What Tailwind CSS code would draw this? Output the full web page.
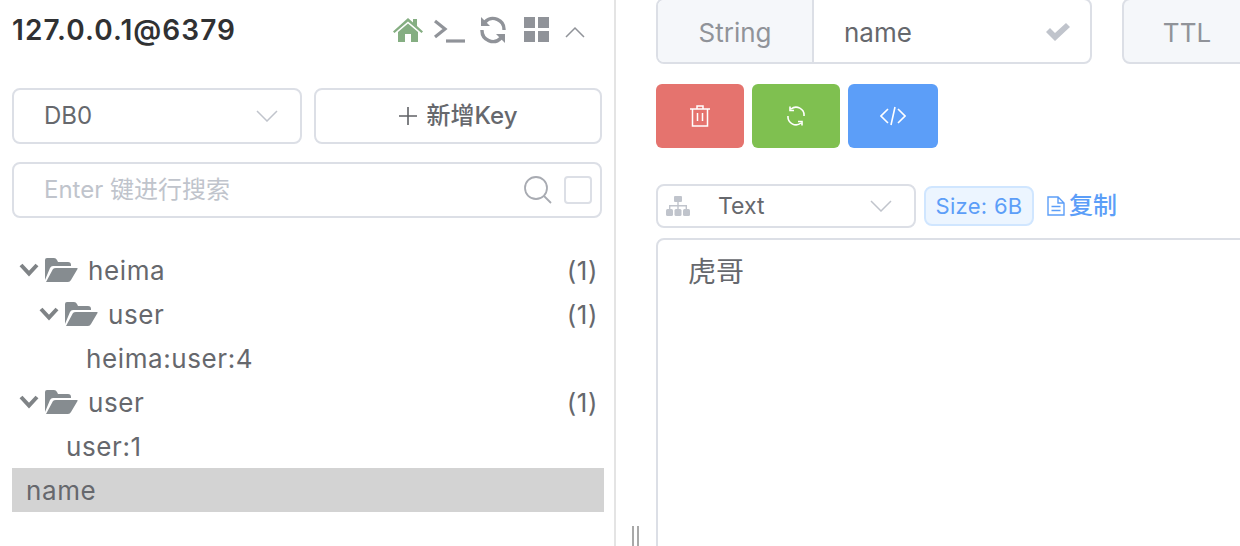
<!DOCTYPE html>
<html lang="zh">
<head>
    <meta charset="UTF-8">
    <title>Redis Key</title>
    <script src="https://cdn.jsdelivr.net/npm/@tailwindcss/browser@4"></script>
</head>
<body class="bg-white overflow-hidden">
<div class="flex h-[546px] w-[1240px] overflow-hidden text-[#66686d] font-['Inter','Noto_Sans_CJK_SC',sans-serif]">
    <!-- Left panel -->
    <div class="w-[616px] shrink-0 border-r-2 border-[#e4e4e4] pl-3 pr-[10px] flex flex-col">
        <!-- Connection title -->
        <div class="h-[60px] flex items-center justify-between">
            <span class="text-[28px] font-semibold text-[#303133] tracking-[1.05px]">127.0.0.1@6379</span>
            <div class="flex items-center mr-[19px]">
                <svg class="w-[30px] h-[26px]" viewBox="0 0 30 26" fill="#85ae82">
                    <path d="M15 1 L20 5.5 V2 H24 V9 L30 14.5 L28.5 16 L15 4.5 L1.500 16 L0 14.500Z"/>
                    <path d="M5 15 L15 6.500 L25 15 V25 H18 V17 H12 V25 H5Z"/>
                </svg>
                <svg class="w-[32px] h-[26px] ml-[10px]" viewBox="0 0 32 26" fill="none" stroke="#909399" stroke-width="3.200">
                    <path d="M2 4 L12 12 L2 20"/>
                    <path d="M13 24 H32"/>
                </svg>
                <svg class="w-[28px] h-[28px] ml-[14px]" viewBox="0 0 28 28" fill="none" stroke="#909399" stroke-width="3.400">
                    <path d="M6 6 A11 11 0 0 1 25 14"/>
                    <path d="M22 22 A11 11 0 0 1 3 14"/>
                    <path d="M2 1 V10 H11Z" fill="#909399" stroke="none"/>
                    <path d="M26 27 V18 H17Z" fill="#909399" stroke="none"/>
                </svg>
                <svg class="w-[26px] h-[26px] ml-[17px]" viewBox="0 0 26 26" fill="#909399">
                    <rect x="0" y="0" width="11" height="11"/>
                    <rect x="14" y="0" width="11" height="11"/>
                    <rect x="0" y="14" width="11" height="11"/>
                    <rect x="14" y="14" width="11" height="11"/>
                </svg>
                <svg class="w-[20px] h-[12px] ml-[15px] mt-[4px]" viewBox="0 0 20 12" fill="none" stroke="#909399" stroke-width="1.500">
                    <path d="M1 11 L10 2 L19 11"/>
                </svg>
            </div>
        </div>

        <!-- DB select and new key -->
        <div class="flex gap-3 mt-[28px]">
            <div class="w-[290px] h-[56px] border-2 border-[#dcdfe6] rounded-lg flex items-center justify-between pl-[30px] pr-[22px] text-[24px]">
                <span>DB0</span>
                <svg class="w-[22px] h-[12px]" viewBox="0 0 22 12" fill="none" stroke="#c0c4cc" stroke-width="1.500"><path d="M1 1 L11 11 L21 1"/></svg>
            </div>
            <button class="w-[288px] h-[56px] border-2 border-[#dcdfe6] rounded-lg flex items-center justify-center gap-[10px] text-[24px] font-medium">
                <svg class="w-[18px] h-[18px]" viewBox="0 0 18 18" fill="none" stroke="#606266" stroke-width="1.600"><path d="M9 0 V18 M0 9 H18"/></svg>
                <span>新增Key</span>
            </button>
        </div>

        <!-- Search -->
        <div class="w-[590px] h-[56px] mt-[18px] border-2 border-[#dcdfe6] rounded-lg flex items-center pl-[30px] pr-[8px] text-[24px] text-[#c0c4cc]">
            <span class="flex-1">Enter 键进行搜索</span>
            <svg class="w-[28px] h-[28px] mr-[12px]" viewBox="0 0 28 28" fill="none" stroke="#a8abb2" stroke-width="1.800">
                <circle cx="12" cy="12" r="11"/>
                <path d="M20 20 L27 27"/>
            </svg>
            <span class="w-[28px] h-[28px] border-2 border-[#dcdfe6] rounded"></span>
        </div>

        <!-- Key tree -->
        <div class="mt-[30px] text-[26px] tracking-[0.6px] w-[592px]">
            <div class="h-11 flex items-center justify-between pr-[6px]">
                <div class="flex items-center">
                    <svg class="w-[20px] h-[14px] ml-[7px]" viewBox="0 0 20 14" fill="none" stroke="#7f8386" stroke-width="4"><path d="M2 2 L10 10.500 L18 2"/></svg>
                    <svg class="w-[34px] h-[26px] ml-[5px]" viewBox="0 0 34 26" fill="#868c90"><path d="M1 23 V3 Q1 1 3 1 H10 Q12 1 13 3 L14 5 H24 Q27 5 27 8 V9 H9 Q7 9 6 11Z"/><path d="M2 25 L9 12 Q10 11 12 11 H33 Q34 11 33.500 12 L27 23 Q26 25 24 25Z"/></svg>
                    <span class="ml-[10px]">heima</span>
                </div>
                <span>(1)</span>
            </div>
            <div class="h-11 flex items-center justify-between pr-[6px]">
                <div class="flex items-center">
                    <svg class="w-[20px] h-[14px] ml-[27px]" viewBox="0 0 20 14" fill="none" stroke="#7f8386" stroke-width="4"><path d="M2 2 L10 10.500 L18 2"/></svg>
                    <svg class="w-[34px] h-[26px] ml-[5px]" viewBox="0 0 34 26" fill="#868c90"><path d="M1 23 V3 Q1 1 3 1 H10 Q12 1 13 3 L14 5 H24 Q27 5 27 8 V9 H9 Q7 9 6 11Z"/><path d="M2 25 L9 12 Q10 11 12 11 H33 Q34 11 33.500 12 L27 23 Q26 25 24 25Z"/></svg>
                    <span class="ml-[10px]">user</span>
                </div>
                <span>(1)</span>
            </div>
            <div class="h-11 flex items-center pl-[74px]">heima:user:4</div>
            <div class="h-11 flex items-center justify-between pr-[6px]">
                <div class="flex items-center">
                    <svg class="w-[20px] h-[14px] ml-[7px]" viewBox="0 0 20 14" fill="none" stroke="#7f8386" stroke-width="4"><path d="M2 2 L10 10.500 L18 2"/></svg>
                    <svg class="w-[34px] h-[26px] ml-[5px]" viewBox="0 0 34 26" fill="#868c90"><path d="M1 23 V3 Q1 1 3 1 H10 Q12 1 13 3 L14 5 H24 Q27 5 27 8 V9 H9 Q7 9 6 11Z"/><path d="M2 25 L9 12 Q10 11 12 11 H33 Q34 11 33.500 12 L27 23 Q26 25 24 25Z"/></svg>
                    <span class="ml-[10px]">user</span>
                </div>
                <span>(1)</span>
            </div>
            <div class="h-11 flex items-center pl-[54px]">user:1</div>
            <div class="h-11 flex items-center pl-[14px] bg-[#d3d3d3]">name</div>
        </div>
    </div>

    <!-- Drag handle and value pane -->
    <div class="w-[40px] shrink-0 flex justify-center items-end gap-[3px] pr-[2px]">
        <span class="w-[2px] h-5 bg-[#a9a9a9]"></span>
        <span class="w-[2px] h-5 bg-[#a9a9a9]"></span>
    </div>

    <div class="flex-1 flex flex-col min-w-0">
        <div class="flex -mt-[2px] gap-[30px]">
            <div class="w-[436px] h-[66px] shrink-0 border-2 border-[#dcdfe6] rounded-lg flex overflow-hidden text-[26px]">
                <div class="w-[156px] bg-[#f5f7fa] border-r-2 border-[#dcdfe6] flex items-center justify-center pt-[2px] text-[#909399]">String</div>
                <div class="flex-1 flex items-center justify-between pl-[30px] pr-[20px] pt-[2px]">
                    <span>name</span>
                    <svg class="w-[24px] h-[18px]" viewBox="0 0 24 18" fill="#c0c4cc"><path d="M0 9 L4 5 L9 10 L20 0 L24 4 L9 18Z"/></svg>
                </div>
            </div>
            <div class="w-[200px] h-[66px] shrink-0 border-2 border-[#dcdfe6] rounded-lg bg-[#f5f7fa] flex items-center justify-center pr-[70px] pt-[2px] text-[26px] text-[#909399]">TTL</div>
        </div>

        <div class="flex gap-2 mt-5">
            <button class="w-[88px] h-[64px] bg-[#e5736e] rounded-md flex items-center justify-center">
                <svg class="w-[22px] h-[22px]" viewBox="0 0 22 22" fill="none" stroke="#fff" stroke-width="1.500"><path d="M1 4 H21 M8 4 V1 H14 V4 M3.500 4 V21 H18.500 V4 M8.500 8 V16 M13.500 8 V16"/></svg>
            </button>
            <button class="w-[88px] h-[64px] bg-[#7fc050] rounded-md flex items-center justify-center">
                <svg class="w-[20px] h-[20px]" viewBox="0 0 20 20" fill="none" stroke="#fff" stroke-width="1.600"><path d="M5 3 A8 8 0 0 1 18 10 M15 17 A8 8 0 0 1 2 10 M4 0.500 V4.500 H8 M16 19.500 V15.500 H12"/></svg>
            </button>
            <button class="w-[90px] h-[64px] bg-[#5c9ef8] rounded-md flex items-center justify-center">
                <svg class="w-[26px] h-[20px]" viewBox="0 0 26 20" fill="none" stroke="#fff" stroke-width="1.600"><path d="M8 3 L1 10 L8 17 M18 3 L25 10 L18 17 M15 1 L11 19"/></svg>
            </button>
        </div>

        <div class="flex items-center mt-9">
            <div class="w-[260px] h-11 border-2 border-[#dcdfe6] rounded-lg flex items-center justify-between pl-[8px] pr-[22px] text-[23px]">
                <div class="flex items-center">
                    <svg class="w-[24px] h-[20px]" viewBox="0 0 24 20" fill="#c0c4cc"><rect x="8" y="0" width="8" height="6" rx="1"/><path d="M11.300 6 H12.700 V9 H21 V13 H19.600 V10.400 H12.700 V13 H11.300 V10.400 H4.400 V13 H3 V9 H11.300Z"/><rect x="0" y="13" width="7" height="7" rx="1.500"/><rect x="8.500" y="13" width="7" height="7" rx="1.500"/><rect x="17" y="13" width="7" height="7" rx="1.500"/></svg>
                    <span class="ml-[28px]">Text</span>
                </div>
                <svg class="w-[22px] h-[12px]" viewBox="0 0 22 12" fill="none" stroke="#c0c4cc" stroke-width="1.500"><path d="M1 1 L11 11 L21 1"/></svg>
            </div>
            <span class="ml-2 h-10 w-[110px] flex items-center justify-center bg-[#ecf5ff] border-2 border-[#d0e6ff] rounded-lg text-[22px] tracking-[0.3px] text-[#5c9ef8] whitespace-nowrap">Size: 6B</span>
            <span class="ml-[13px] flex items-center text-[24px] text-[#5c9ef8] font-medium">
                <svg class="w-[18px] h-[20px]" viewBox="0 0 18 20" fill="none" stroke="#5c9ef8" stroke-width="1.400"><path d="M1 1 H11 L17 7 V19 H1Z M11 1 V7 H17 M4.500 10.500 H13.500 M4.500 14.500 H13.500"/></svg>
                <span class="ml-[4px]">复制</span>
            </span>
        </div>

        <div class="w-[700px] h-[420px] shrink-0 mt-[10px] border-2 border-[#dcdfe6] rounded-lg pl-[30px] pt-[14px] text-[28px] leading-9">虎哥</div>
    </div>
</div>
</body>
</html>
